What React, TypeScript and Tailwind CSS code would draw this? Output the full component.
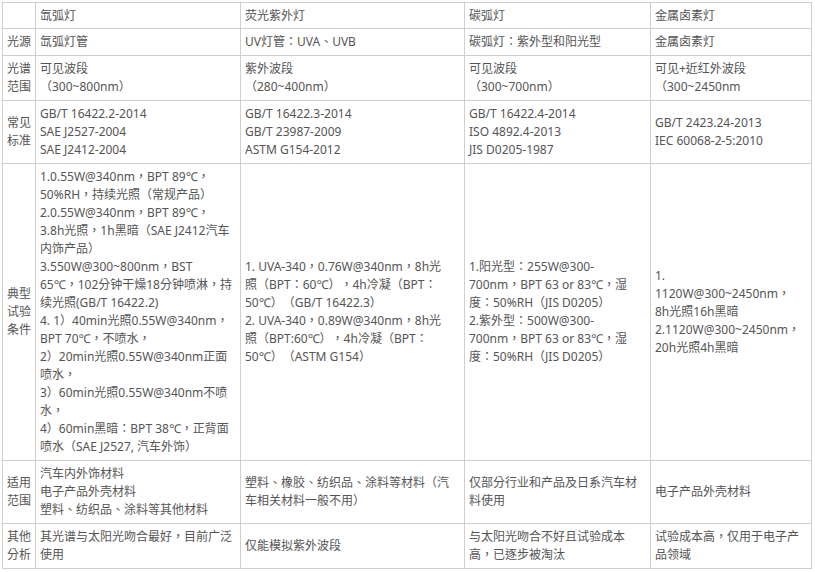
const font = { fontFamily: '"Noto Sans", "Noto Sans CJK TC", sans-serif' };

type Row = { head: string[]; cells: string[][]; header?: boolean };

const rows: Row[] = [
  { head: [], cells: [["氙弧灯"], ["荧光紫外灯"], ["碳弧灯"], ["金属卤素灯"]], header: true },
  {
    head: ["光源"],
    cells: [["氙弧灯管"], ["UV灯管：UVA、UVB"], ["碳弧灯：紫外型和阳光型"], ["金属卤素灯"]],
  },
  {
    head: ["光谱", "范围"],
    cells: [
      ["可见波段", "（300~800nm）"],
      ["紫外波段", "（280~400nm）"],
      ["可见波段", "（300~700nm）"],
      ["可见+近红外波段", "（300~2450nm"],
    ],
  },
  {
    head: ["常见", "标准"],
    cells: [
      ["GB/T 16422.2-2014", "SAE J2527-2004", "SAE J2412-2004"],
      ["GB/T 16422.3-2014", "GB/T 23987-2009", "ASTM G154-2012"],
      ["GB/T 16422.4-2014", "ISO 4892.4-2013", "JIS D0205-1987"],
      ["GB/T 2423.24-2013", "IEC 60068-2-5:2010"],
    ],
  },
  {
    head: ["典型", "试验", "条件"],
    cells: [
      [
        "1.0.55W@340nm，BPT 89℃，",
        "50%RH，持续光照（常规产品）",
        "2.0.55W@340nm，BPT 89℃，",
        "3.8h光照，1h黑暗（SAE J2412汽车",
        "内饰产品）",
        "3.550W@300~800nm，BST",
        "65℃，102分钟干燥18分钟喷淋，持",
        "续光照(GB/T 16422.2)",
        "4. 1）40min光照0.55W@340nm，",
        "BPT 70℃，不喷水，",
        "2）20min光照0.55W@340nm正面",
        "喷水，",
        "3）60min光照0.55W@340nm不喷",
        "水，",
        "4）60min黑暗：BPT 38℃，正背面",
        "喷水（SAE J2527, 汽车外饰）",
      ],
      [
        "1. UVA-340，0.76W@340nm，8h光",
        "照（BPT：60℃），4h冷凝（BPT：",
        "50℃）（GB/T 16422.3）",
        "2. UVA-340，0.89W@340nm，8h光",
        "照（BPT:60℃），4h冷凝（BPT：",
        "50℃）（ASTM G154）",
      ],
      [
        "1.阳光型：255W@300-",
        "700nm，BPT 63 or 83℃，湿",
        "度：50%RH（JIS D0205）",
        "2.紫外型：500W@300-",
        "700nm，BPT 63 or 83℃，湿",
        "度：50%RH（JIS D0205）",
      ],
      ["1.", "1120W@300~2450nm，", "8h光照16h黑暗", "2.1120W@300~2450nm，", "20h光照4h黑暗"],
    ],
  },
  {
    head: ["适用", "范围"],
    cells: [
      ["汽车内外饰材料", "电子产品外壳材料", "塑料、纺织品、涂料等其他材料"],
      ["塑料、橡胶、纺织品、涂料等材料（汽", "车相关材料一般不用）"],
      ["仅部分行业和产品及日系汽车材", "料使用"],
      ["电子产品外壳材料"],
    ],
  },
  {
    head: ["其他", "分析"],
    cells: [
      ["其光谱与太阳光吻合最好，目前广泛", "使用"],
      ["仅能模拟紫外波段"],
      ["与太阳光吻合不好且试验成本", "高，已逐步被淘汰"],
      ["试验成本高，仅用于电子产", "品领域"],
    ],
  },
];

function Cell({ lines, header }: { lines: string[]; header?: boolean }) {
  return (
    <div
      className={`bg-white px-[4px] flex flex-col justify-center ${
        header ? "pt-[4px] pb-[3px]" : "py-[4px]"
      }`}
    >
      {lines.map((l, i) => (
        <span key={i} className="whitespace-nowrap">
          {l}
        </span>
      ))}
    </div>
  );
}

export default function App() {
  return (
    <div className="bg-white w-[815px] h-[572px] pl-[2px] pt-[2px]" style={font}>
      <div className="grid grid-cols-[32px_204px_223px_185px_160px] gap-px bg-[#cfcfcf] border border-[#cfcfcf] w-fit text-[12px] leading-[18px] text-[#555] [text-spacing-trim:space-all]">
        {rows.map((r, ri) => (
          <div key={ri} className="contents">
            <Cell lines={r.head} header={r.header} />
            {r.cells.map((c, ci) => (
              <Cell key={ci} lines={c} header={r.header} />
            ))}
          </div>
        ))}
      </div>
    </div>
  );
}
